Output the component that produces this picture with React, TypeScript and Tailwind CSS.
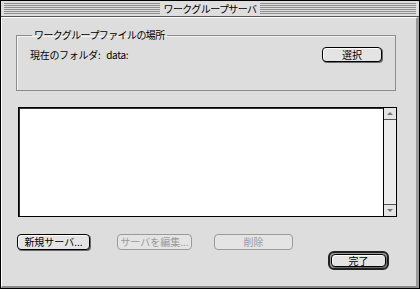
import React from 'react';

const jp = "font-['Noto_Sans_CJK_JP','Noto_Sans_CJK_SC',sans-serif]";

function Stripes({ className }: { className: string }) {
  return (
    <div className={'flex flex-col gap-px ' + className}>
      {[0, 1, 2, 3, 4, 5].map((i) => (
        <div key={i} className="h-px bg-[#8e8e8e]" />
      ))}
    </div>
  );
}

function MacButton({
  children,
  disabled,
  className,
}: {
  children: React.ReactNode;
  disabled?: boolean;
  className: string;
}) {
  return (
    <button
      disabled={disabled}
      className={
        'flex items-center justify-center rounded-[4px] border bg-[#e4e4e4] text-[10px] leading-none ' +
        (disabled
          ? 'border-[#9a9a9a] text-[#9a9a9a]'
          : 'border-black text-black shadow-[1px_1px_0_#6b6b6b,inset_1px_1px_0_#fff]') +
        ' ' +
        className
      }
    >
      {children}
    </button>
  );
}

export default function App() {
  return (
    <div className={'flex h-[289px] w-[420px] flex-col border border-black bg-[#dddddd] ' + jp}>
      {/* Title bar */}
      <div className="flex h-[16px] items-center border-b border-[#555] bg-[#dedede] px-[3px]">
        <Stripes className="flex-1" />
        <span className="px-[4px] text-[10px] leading-none tracking-[-0.6px] text-black">
          ワークグループサーバ
        </span>
        <Stripes className="flex-1" />
      </div>

      {/* Content */}
      <div className="flex flex-1 flex-col border-b-[2px] border-l border-r-[3px] border-t border-b-[#8a8a8a] border-l-white border-r-[#9a9a9a] border-t-white pl-[14px] pr-[19px] pt-[10px]">
        <fieldset className="w-[380px] border border-[#8c8c8c] px-[13px] pb-[28px] pt-[5px] shadow-[inset_1px_1px_0_#f4f4f4]">
          <legend className="ml-[2px] px-[2px] text-[10px] leading-[14px] tracking-[-0.6px] text-black">
            ワークグループファイルの場所
          </legend>
          <div className="flex items-center justify-between">
            <span className="text-[10px] leading-none tracking-[-0.3px] text-black">
              現在のフォルダ:&nbsp;&nbsp;&nbsp;data:
            </span>
            <MacButton className="h-[15px] w-[60px]">選択</MacButton>
          </div>
        </fieldset>

        {/* List with scroll bar */}
        <div className="ml-[2px] mt-[16px] flex h-[110px] w-[379px] border border-black bg-white shadow-[inset_1px_1px_0_#333]">
          <div className="flex-1" />
          <div className="flex w-[13px] flex-col border-l border-black bg-[#ececec]">
            <div className="flex h-[12px] items-center justify-center border-b border-[#555] bg-[#e4e4e4]">
              <div className="h-0 w-0 border-x-[3px] border-b-[3px] border-x-transparent border-b-[#777]" />
            </div>
            <div className="flex-1" />
            <div className="flex h-[12px] items-center justify-center border-t border-[#555] bg-[#e4e4e4]">
              <div className="h-0 w-0 border-x-[3px] border-t-[3px] border-x-transparent border-t-[#777]" />
            </div>
          </div>
        </div>

        {/* Buttons */}
        <div className="ml-[1px] mt-[17px] flex">
          <MacButton className="h-[16px] w-[73px]">新規サーバ...</MacButton>
          <MacButton disabled className="ml-[27px] h-[16px] w-[75px]">
            サーバを編集...
          </MacButton>
          <MacButton disabled className="ml-[22px] h-[16px] w-[79px]">
            削除
          </MacButton>
        </div>
        <div className="mr-[8px] mt-[1px] flex self-end rounded-[6px] border-[2px] border-[#222] bg-[#9c9c9c] p-[1px]">
          <MacButton className="h-[13px] w-[55px]">完了</MacButton>
        </div>
      </div>
    </div>
  );
}
